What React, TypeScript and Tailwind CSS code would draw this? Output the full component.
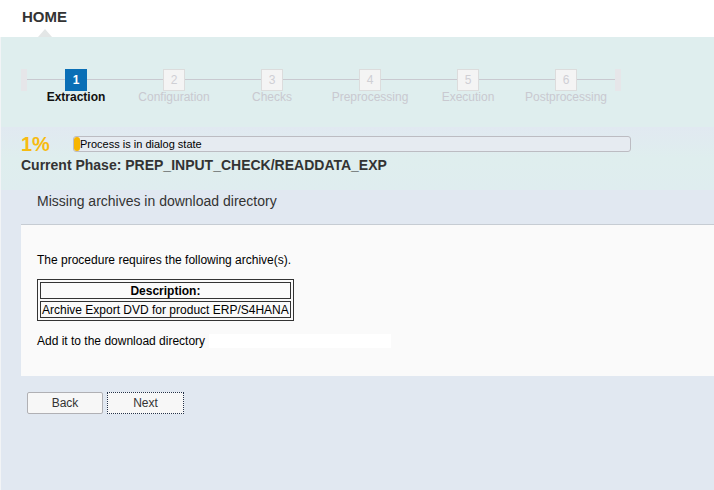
import React from 'react'

const steps = [
  'Extraction',
  'Configuration',
  'Checks',
  'Preprocessing',
  'Execution',
  'Postprocessing',
]

export default function App() {
  const current = 0

  return (
    <div
      className="w-[714px] h-[490px] overflow-hidden bg-[#e1e8f1] text-[#333]"
      style={{ fontFamily: '"Liberation Sans", Arial, sans-serif' }}
    >
      {/* header */}
      <div className="relative h-[37px] bg-white">
        <div className="pl-[22px] pt-[9px] text-[15px] font-bold leading-[16px] text-[#333]">
          HOME
        </div>
        <div className="absolute left-[38px] bottom-0 w-0 h-0 border-l-[7px] border-r-[7px] border-b-[8px] border-l-transparent border-r-transparent border-b-[#e3e6e6]" />
      </div>

      <div className="border-l border-[#f2f4f6] h-[453px]">
        {/* roadmap */}
        <div className="h-[90px] bg-[#dfeeee] pl-[20px] pt-[32px]">
          <div className="relative flex w-[601px]">
            <div className="absolute left-[6px] right-[6px] top-[10px] h-px bg-[#c9c9d0]" />
            <div className="relative w-[6px] h-[22px] bg-[#e6e6e9]" />
            {steps.map((s, i) => (
              <div key={s} className="relative w-[98px] flex flex-col items-center">
                <div
                  className={
                    i === current
                      ? 'w-[22px] h-[22px] bg-[#0a6fb6] text-white text-[12px] font-bold flex items-center justify-center'
                      : 'w-[22px] h-[22px] bg-[#f4f4f4] border border-[#dcdcdc] text-[#cfcfd4] text-[12px] flex items-center justify-center'
                  }
                >
                  {i + 1}
                </div>
                <div
                  className={
                    i === current
                      ? 'text-[12px] font-bold leading-[14px] mt-[-1px] whitespace-nowrap text-[#111]'
                      : 'text-[12px] leading-[14px] mt-[-1px] whitespace-nowrap text-[#c9c9d0]'
                  }
                >
                  {s}
                </div>
              </div>
            ))}
            <div className="relative w-[6px] h-[22px] bg-[#e6e6e9]" />
          </div>
        </div>

        {/* progress */}
        <div className="bg-gradient-to-b from-[#e1e9f1] via-[#dfeeee] to-[#dfedef] pt-[6px] h-[63px] pl-[20px]">
          <div className="flex items-center">
            <div className="w-[52px] text-[20px] font-bold leading-[22px] text-[#f7bb12]">1%</div>
            <div className="relative w-[558px] h-[16px] rounded-[3px] border border-[#bcbcc2] bg-[#e6ebf1] flex items-center">
              <div className="absolute left-[0px] top-0 h-full w-[6px] rounded-[3px] bg-[#f7b500]" />
              <span className="pl-[6px] text-[11px] leading-[12px] text-[#000]">
                Process is in dialog state
              </span>
            </div>
          </div>
          <div className="mt-[2px] text-[14px] font-bold leading-[16px] text-[#333]">
            Current Phase: PREP_INPUT_CHECK/READDATA_EXP
          </div>
        </div>

        {/* content */}
        <div className="pl-[20px]">
          <div className="h-[35px] border-b border-[#c6ccd3] pl-[16px] pt-[3px] text-[14px] leading-[16px] text-[#333]">
            Missing archives in download directory
          </div>
          <div className="h-[151px] bg-[#fafafa] pl-[16px] pt-[28px] text-[12px] text-[#000]">
            <div className="leading-[14px]">The procedure requires the following archive(s).</div>
            <table className="mt-[12px] border border-[#333] border-separate border-spacing-[2px] text-[12px]">
              <tbody>
                <tr>
                  <th className="border border-[#333] px-[1px] h-[17px] leading-[14px] font-bold text-center">
                    Description:
                  </th>
                </tr>
                <tr>
                  <td className="border border-[#333] px-[1px] h-[17px] leading-[14px]">
                    Archive Export DVD for product ERP/S4HANA
                  </td>
                </tr>
              </tbody>
            </table>
            <div className="mt-[13px] flex items-center leading-[14px]">
              <span>Add it to the download directory</span>
              <span className="ml-[4px] w-[182px] h-[14px] bg-white" />
            </div>
          </div>
          <div className="flex gap-[4px] pl-[6px] pt-[16px]">
            <button className="w-[76px] h-[22px] rounded-[2px] border border-[#b0b0b4] bg-[#f7f7f7] text-[12px] text-[#333]">
              Back
            </button>
            <button className="w-[77px] h-[22px] border border-dotted border-[#24324a] bg-[#f7f7f7] text-[12px] text-[#333]">
              Next
            </button>
          </div>
        </div>
      </div>
    </div>
  )
}
